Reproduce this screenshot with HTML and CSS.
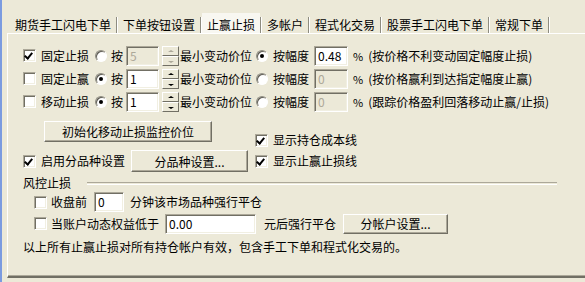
FILE: index.html
```html
<!DOCTYPE html>
<html lang="zh-CN">
<head>
  <meta charset="UTF-8">
  <title>止赢止损</title>
  <link rel="stylesheet" href="styles.css">
</head>
<body>
  <div class="window">
    <div class="tabs">
      <span class="tab">期货手工闪电下单</span><span class="sep"></span>
      <span class="tab">下单按钮设置</span><span class="sep"></span>
      <span class="tab active">止赢止损</span><span class="sep"></span>
      <span class="tab">多帐户</span><span class="sep"></span>
      <span class="tab">程式化交易</span><span class="sep"></span>
      <span class="tab">股票手工闪电下单</span><span class="sep"></span>
      <span class="tab">常规下单</span><span class="sep"></span>
    </div>

    <div class="panel">
      <!-- 固定止损 / 固定止赢 / 移动止损 -->
      <div class="row stop-row first">
        <span class="chk on"></span><span class="lbl chk-lbl">固定止损</span>
        <span class="radio by-tick"></span><span class="lbl press">按</span>
        <span class="field tick-field disabled">5</span>
        <span class="spin disabled"><span class="up"></span><span class="down"></span></span>
        <span class="lbl tick-lbl">最小变动价位</span>
        <span class="radio on by-pct"></span><span class="lbl pct-lbl">按幅度</span>
        <span class="field pct-field">0.48</span>
        <span class="lbl pct-sign">%</span><span class="lbl note">(按价格不利变动固定幅度止损)</span>
      </div>
      <div class="row stop-row">
        <span class="chk"></span><span class="lbl chk-lbl">固定止赢</span>
        <span class="radio on by-tick"></span><span class="lbl press">按</span>
        <span class="field tick-field">1</span>
        <span class="spin"><span class="up"></span><span class="down"></span></span>
        <span class="lbl tick-lbl">最小变动价位</span>
        <span class="radio by-pct"></span><span class="lbl pct-lbl">按幅度</span>
        <span class="field pct-field disabled">0</span>
        <span class="lbl pct-sign">%</span><span class="lbl note">(按价格赢利到达指定幅度止赢)</span>
      </div>
      <div class="row stop-row">
        <span class="chk"></span><span class="lbl chk-lbl">移动止损</span>
        <span class="radio on by-tick"></span><span class="lbl press">按</span>
        <span class="field tick-field">1</span>
        <span class="spin"><span class="up"></span><span class="down"></span></span>
        <span class="lbl tick-lbl">最小变动价位</span>
        <span class="radio by-pct"></span><span class="lbl pct-lbl">按幅度</span>
        <span class="field pct-field disabled">0</span>
        <span class="lbl pct-sign">%</span><span class="lbl note">(跟踪价格盈利回落移动止赢/止损)</span>
      </div>

      <div class="row init-row">
        <button class="btn btn-init">初始化移动止损监控价位</button>
        <span class="show-cost"><span class="chk on"></span><span class="lbl chk-lbl">显示持仓成本线</span></span>
      </div>

      <div class="row variety-row">
        <span class="chk on"></span><span class="lbl chk-lbl">启用分品种设置</span>
        <button class="btn btn-variety">分品种设置...</button>
        <span class="chk on show-line"></span><span class="lbl chk-lbl">显示止赢止损线</span>
      </div>

      <!-- 风控止损 -->
      <div class="group-title">
        <span class="lbl">风控止损</span><span class="group-line"></span>
      </div>
      <div class="row risk-row close-row">
        <span class="chk"></span><span class="lbl risk-lbl">收盘前</span>
        <span class="field min-field">0</span>
        <span class="lbl min-lbl">分钟该市场品种强行平仓</span>
      </div>
      <div class="row risk-row equity-row">
        <span class="chk"></span><span class="lbl risk-lbl">当账户动态权益低于</span>
        <span class="field equity-field">0.00</span>
        <span class="lbl equity-lbl">元后强行平仓</span>
        <button class="btn btn-account">分帐户设置...</button>
      </div>
      <div class="footnote">以上所有止赢止损对所有持仓帐户有效，包含手工下单和程式化交易的。</div>
    </div>
  </div>
</body>
</html>
```

FILE: styles.css
```css
body {
  margin: 0;
  background-color: #ece9d8;
  font-family: "Noto Sans CJK SC", "Liberation Sans", sans-serif;
  font-size: 12px;
  color: #000;
  overflow: hidden;
}

.window {
  width: 583px;
  height: 282px;
  border-left: 2px solid #7b9be0;
}

/* tab strip */
.tabs {
  display: flex;
  height: 20px;
  padding-top: 13px;
  margin-left: 8px;
}

.tab {
  padding: 3px 5px 0;
  line-height: 17px;
  white-space: nowrap;
}

.tab.active {
  background-color: #f8f7f1;
}

.sep {
  align-self: flex-end;
  width: 1px;
  height: 16px;
  border-left: 1px solid #8e8c80;
  border-right: 1px solid #fff;
  box-sizing: border-box;
  width: 2px;
}

/* page */
.panel {
  margin-left: 5px;
  height: 242px;
  border-top: 1px solid #fff;
  border-left: 1px solid #fff;
  border-bottom: 2px solid #716f64;
  box-shadow: 0 -1px 0 #aca899 inset;
  padding-left: 15px;
}

.row {
  display: flex;
  align-items: center;
  height: 21px;
  white-space: nowrap;
}

.lbl {
  line-height: 14px;
  white-space: nowrap;
}

/* checkbox + radio */
.chk {
  position: relative;
  flex: none;
  width: 13px;
  height: 13px;
  box-sizing: border-box;
  background-color: #fff;
  border: 1px solid;
  border-color: #aca899 #fff #fff #aca899;
  box-shadow: inset 1px 1px 0 #716f64, inset -1px -1px 0 #f1efe2;
}

.chk.on::after {
  content: "";
  position: absolute;
  left: 2px;
  top: 1px;
  width: 3px;
  height: 6px;
  border-right: 2px solid #000;
  border-bottom: 2px solid #000;
  transform: rotate(40deg);
}

.chk-lbl {
  margin-left: 5px;
}

.radio {
  position: relative;
  flex: none;
  width: 12px;
  height: 12px;
  box-sizing: border-box;
  border-radius: 50%;
  background-color: #fff;
  border: 1px solid;
  border-color: #8e8c80 #fff #fff #8e8c80;
  box-shadow: inset 1px 1px 0 #5e5c54;
}

.radio.on::after {
  content: "";
  position: absolute;
  left: 3px;
  top: 3px;
  width: 4px;
  height: 4px;
  border-radius: 50%;
  background-color: #000;
}

/* sunken edit box */
.field {
  flex: none;
  height: 20px;
  box-sizing: border-box;
  padding: 0 3px;
  line-height: 17px;
  background-color: #fff;
  border: 1px solid;
  border-color: #aca899 #fff #fff #aca899;
  box-shadow: inset 1px 1px 0 #716f64, inset -1px -1px 0 #f1efe2;
}

.field.disabled {
  background-color: #ece9d8;
  color: #aca899;
}

/* up/down spinner */
.spin {
  display: flex;
  flex-direction: column;
  flex: none;
  width: 17px;
  height: 20px;
  margin-left: 3px;
}

.spin .up,
.spin .down {
  position: relative;
  flex: 1;
  box-sizing: border-box;
  border: 1px solid;
  border-color: #fff #716f64 #716f64 #fff;
}

.spin .up::after,
.spin .down::after {
  content: "";
  position: absolute;
  left: 5px;
  top: 3px;
  border-left: 3px solid transparent;
  border-right: 3px solid transparent;
}

.spin .up::after {
  border-bottom: 2px solid #000;
}

.spin .down::after {
  top: 4px;
  border-top: 2px solid #000;
}

.spin.disabled .up::after {
  border-bottom-color: #aca899;
}

.spin.disabled .down::after {
  border-top-color: #aca899;
}

/* raised button */
.btn {
  flex: none;
  height: 21px;
  padding: 0;
  font-family: inherit;
  font-size: 12px;
  color: #000;
  background-color: #ece9d8;
  border: 1px solid;
  border-color: #fff #716f64 #716f64 #fff;
  box-shadow: inset -1px -1px 0 #aca899;
}

/* stop rows */
.stop-row {
  margin-top: 2px;
}

.stop-row.first {
  margin-top: 11px;
}

.by-tick {
  margin-left: 6px;
}

.press {
  margin-left: 4px;
}

.tick-field {
  width: 33px;
  margin-left: 3px;
}

.tick-lbl {
  margin-left: 1px;
}

.by-pct {
  margin-left: 4px;
}

.pct-lbl {
  margin-left: 5px;
}

.pct-field {
  width: 34px;
  margin-left: 5px;
}

.pct-sign {
  margin-left: 5px;
  font-size: 11px;
}

.note {
  margin-left: 5px;
}

.init-row {
  margin-top: 9px;
  height: 24px;
  align-items: flex-start;
}

.btn-init {
  width: 168px;
  margin-left: 21px;
}

.show-cost {
  display: flex;
  align-items: center;
  margin-left: 43px;
  margin-top: 12px;
}

.variety-row {
  margin-top: 5px;
  height: 22px;
}

.btn-variety {
  width: 117px;
  height: 22px;
  margin-left: 6px;
}

.show-line {
  margin-left: 7px;
}

/* risk group */
.group-title {
  display: flex;
  align-items: center;
  height: 14px;
  margin-top: 4px;
}

.group-line {
  width: 470px;
  height: 1px;
  margin-left: 16px;
  border-top: 1px solid #aca899;
  border-bottom: 1px solid #fff;
}

.risk-row .chk {
  margin-left: 11px;
}

.risk-lbl {
  margin-left: 4px;
}

.close-row {
  margin-top: 2px;
  height: 20px;
}

.min-field {
  width: 30px;
  margin-left: 7px;
}

.min-lbl {
  margin-left: 6px;
}

.equity-row {
  margin-top: 1px;
}

.equity-field {
  width: 91px;
  margin-left: 6px;
}

.equity-lbl {
  margin-left: 8px;
}

.btn-account {
  width: 105px;
  height: 20px;
  margin-left: 7px;
}

.footnote {
  margin-top: 6px;
  line-height: 14px;
}
```
